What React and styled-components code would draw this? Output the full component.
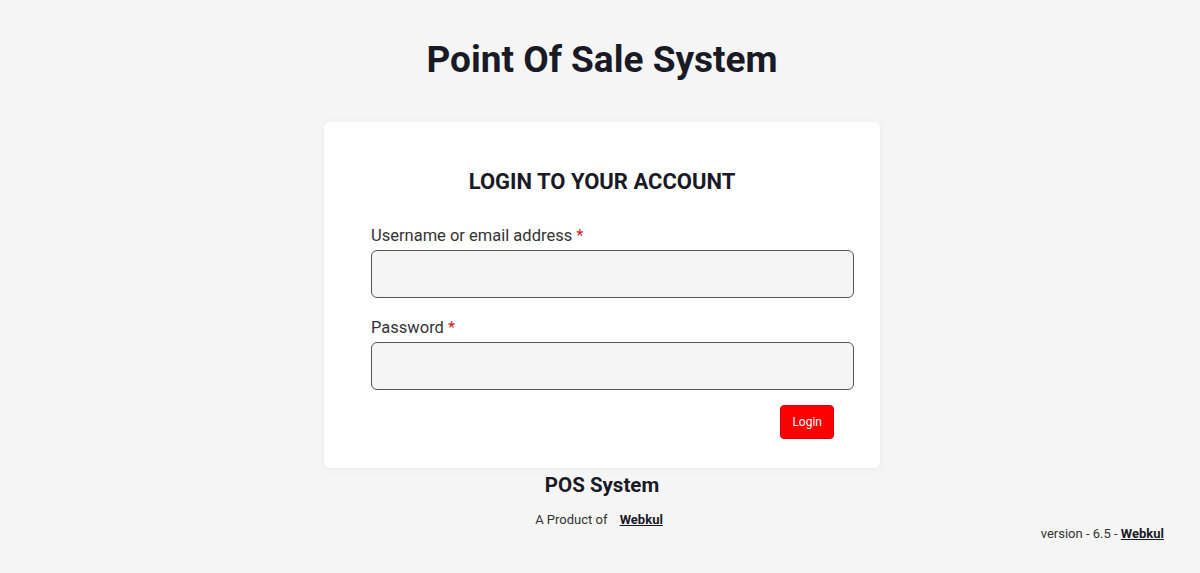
import styled, { createGlobalStyle } from "styled-components";

const GlobalStyle = createGlobalStyle`
  body {
    margin: 0;
    background: #f5f5f5;
    font-family: Roboto, "Liberation Sans", sans-serif;
    color: #1c1c28;
  }
`;

const Page = styled.div`
  display: flex;
  flex-direction: column;
  align-items: center;
  min-height: 573px;
  box-sizing: border-box;
  padding: 37px 0 0 4px;
`;

const Title = styled.h1`
  margin: 0;
  font-size: 37px;
  line-height: 46px;
  font-weight: 700;
  color: #1a1a26;
`;

const Card = styled.div`
  box-sizing: border-box;
  width: 556px;
  margin-top: 39px;
  padding: 47px 26px 29px 47px;
  background: #fff;
  border-radius: 6px;
  box-shadow: 0 1px 6px rgba(0, 0, 0, 0.05);
`;

const Heading = styled.h2`
  margin: 0 0 31px -21px;
  text-align: center;
  font-size: 22px;
  line-height: 26px;
  font-weight: 700;
  color: #1a1a26;
`;

const Form = styled.form`
  display: flex;
  flex-direction: column;
  gap: ${(p) => p.gap}px;
  margin: 0;
`;

const Field = styled.div`
  display: flex;
  flex-direction: column;
`;

const Label = styled.label`
  font-size: 16.5px;
  line-height: 20px;
  color: #333;
  margin-bottom: 4px;
`;

const Required = styled.span`
  color: #c81e1e;
  margin-left: 4px;
`;

const Input = styled.input`
  box-sizing: border-box;
  height: 48px;
  width: 100%;
  border: 1px solid #555;
  border-radius: 6px;
  background: #f5f5f5;
  outline: none;
  padding: 0 12px;
  font: inherit;
`;

const Actions = styled.div`
  display: flex;
  justify-content: flex-end;
  padding-right: 20px;
  margin-top: -5px;
`;

const Button = styled.button`
  height: 34px;
  padding: 0 11px;
  border: 1px solid #d40000;
  border-radius: 4px;
  background: #ff0000;
  color: #fff;
  font-family: inherit;
  font-size: 12px;
  cursor: pointer;
`;

const Brand = styled.div`
  margin-top: 5px;
  font-size: 20.5px;
  line-height: 24px;
  font-weight: 700;
  color: #1a1a26;
`;

const Credit = styled.div`
  margin-top: 15px;
  padding-right: 6px;
  font-size: 13px;
  line-height: 16px;
  color: #333;
`;

const Link = styled.a`
  color: #1a1a26;
  font-weight: 700;
  text-decoration: underline;
  margin-left: ${(p) => p.gap || 0}px;
`;

const Version = styled.div`
  align-self: stretch;
  text-align: right;
  padding-right: 36px;
  margin-top: -2px;
  font-size: 13px;
  line-height: 16px;
  color: #333;
`;

export default function App() {
  return (
    <>
      <GlobalStyle />
      <Page>
        <Title>Point Of Sale System</Title>
        <Card>
          <Heading>LOGIN TO YOUR ACCOUNT</Heading>
          <Form gap={20} onSubmit={(e) => e.preventDefault()}>
            <Field>
              <Label>
                Username or email address<Required>*</Required>
              </Label>
              <Input type="text" />
            </Field>
            <Field>
              <Label>
                Password<Required>*</Required>
              </Label>
              <Input type="password" />
            </Field>
            <Actions>
              <Button>Login</Button>
            </Actions>
          </Form>
        </Card>
        <Brand>POS System</Brand>
        <Credit>
          A Product of <Link gap={9}>Webkul</Link>
        </Credit>
        <Version>
          version - 6.5 - <Link>Webkul</Link>
        </Version>
      </Page>
    </>
  );
}
